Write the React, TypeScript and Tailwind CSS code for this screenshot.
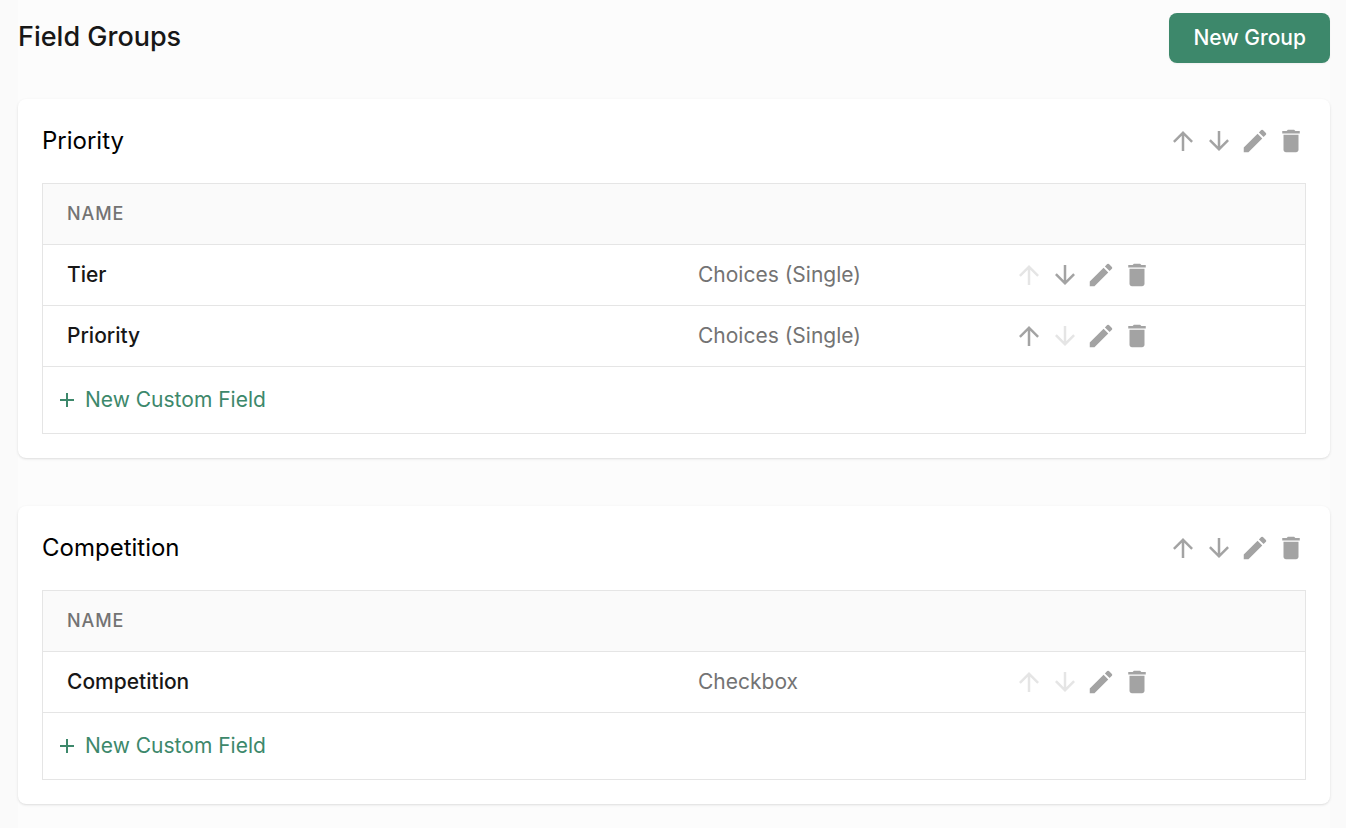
import {
  MdAdd,
  MdArrowDownward,
  MdArrowUpward,
  MdDelete,
  MdEdit,
} from 'react-icons/md';

type Field = { name: string; type: string };
type Group = { name: string; fields: Field[] };

// Constant data for the groups
const groups: Group[] = [
  {
    name: 'Priority',
    fields: [
      { name: 'Tier', type: 'Choices (Single)' },
      { name: 'Priority', type: 'Choices (Single)' },
    ],
  },
  {
    name: 'Competition',
    fields: [{ name: 'Competition', type: 'Checkbox' }],
  },
];

type ActionsProps = { label: string; canUp?: boolean; canDown?: boolean };

/**
 * Move, edit and delete buttons
 */
const Actions = ({ label, canUp = true, canDown = true }: ActionsProps) => {
  const button = 'block text-[#a3a3a3] disabled:text-[#e5e5e5]';

  return (
    <div className="flex items-center gap-1.5">
      <button className={button} disabled={!canUp} aria-label={`Move ${label} up`}>
        <MdArrowUpward size={30} />
      </button>
      <button className={button} disabled={!canDown} aria-label={`Move ${label} down`}>
        <MdArrowDownward size={30} />
      </button>
      <button className={button} aria-label={`Edit ${label}`}>
        <MdEdit size={30} />
      </button>
      <button className={button} aria-label={`Delete ${label}`}>
        <MdDelete size={30} />
      </button>
    </div>
  );
};

/**
 * Card with the table of custom fields in a group
 */
const GroupCard = ({ group }: { group: Group }) => (
  <section className="rounded-lg bg-white p-6 shadow-sm">
    <div className="mb-6 flex items-center justify-between">
      <h2 className="text-2xl leading-9 text-black">{group.name}</h2>
      <Actions label={`${group.name} group`} />
    </div>

    <table className="w-full table-fixed border-collapse border border-[#e5e5e5] text-left">
      <thead>
        <tr className="h-[61px] border-b border-[#e5e5e5] bg-[#fafafa]">
          <th className="w-1/2 px-6 text-lg font-medium tracking-wider text-[#737373] uppercase">
            Name
          </th>
          <td className="w-1/4"></td>
          <td className="w-1/4"></td>
        </tr>
      </thead>
      <tbody>
        {group.fields.map((field, index) => (
          <tr key={field.name} className="h-[61px] border-b border-[#e5e5e5]">
            <th className="px-6 text-[21px] font-medium text-[#171717]">{field.name}</th>
            <td className="px-6 text-[21px] text-[#737373]">{field.type}</td>
            <td className="px-6">
              <Actions
                label={field.name}
                canUp={index > 0}
                canDown={index < group.fields.length - 1}
              />
            </td>
          </tr>
        ))}
        <tr className="h-[67px]">
          <td colSpan={3} className="px-3">
            <button className="flex items-center gap-1.5 text-[21px] text-[#3d886b]">
              <MdAdd size={24} />
              New Custom Field
            </button>
          </td>
        </tr>
      </tbody>
    </table>
  </section>
);

const App = () => {
  return (
    <div className="min-h-screen bg-[#fafafa] pr-4 pl-[18px] font-['Inter',sans-serif]">
      <main className="min-h-screen bg-[#fcfcfc] pt-[13px] pb-6">
        <header className="mb-9 flex items-start justify-between">
          <h1 className="text-[27px] leading-12 font-medium text-[#171717]">Field Groups</h1>
          <button className="h-[50px] rounded-lg bg-[#3d886b] px-6 text-[21px] font-medium text-white shadow-xs">
            New Group
          </button>
        </header>

        {/* Render the groups */}
        <div className="flex flex-col gap-12">
          {groups.map((group) => (
            <GroupCard key={group.name} group={group} />
          ))}
        </div>
      </main>
    </div>
  );
};

export default App;
